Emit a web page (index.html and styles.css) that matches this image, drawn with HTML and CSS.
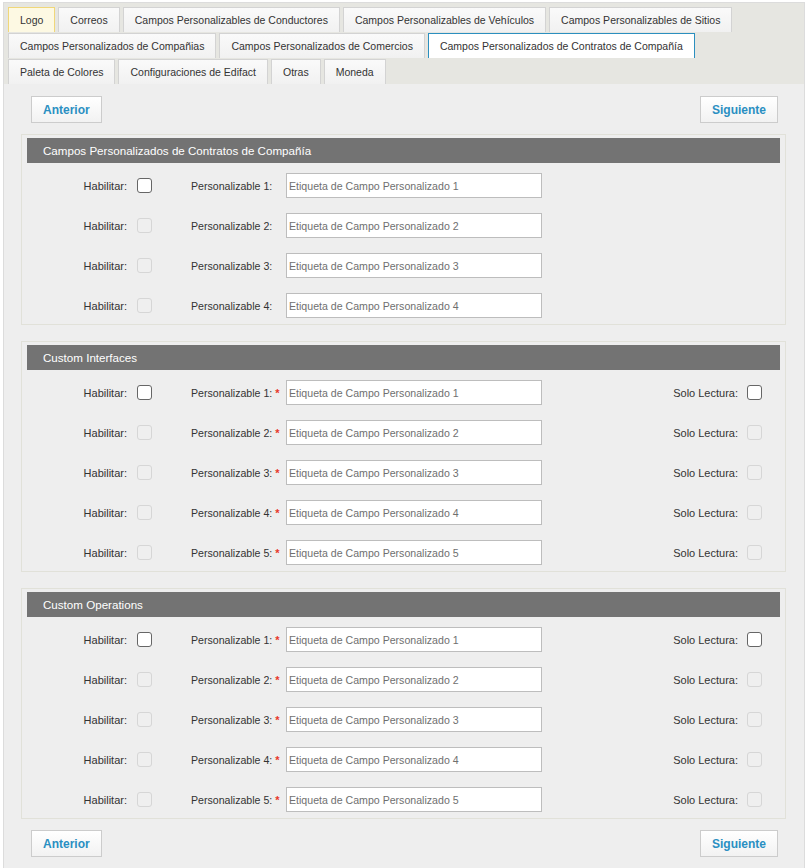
FILE: index.html
```html
<!DOCTYPE html>
<html lang="es">
<head>
<meta charset="utf-8">
<title>Configuración</title>
<link rel="stylesheet" href="styles.css">
</head>
<body>
<div class="page">
  <div class="tabstrip">
    <div class="tabrow">
      <span class="tab tab-hover">Logo</span>
      <span class="tab">Correos</span>
      <span class="tab">Campos Personalizables de Conductores</span>
      <span class="tab">Campos Personalizables de Vehículos</span>
      <span class="tab">Campos Personalizables de Sitios</span>
    </div>
    <div class="tabrow">
      <span class="tab">Campos Personalizados de Compañias</span>
      <span class="tab">Campos Personalizados de Comercios</span>
      <span class="tab tab-active">Campos Personalizados de Contratos de Compañía</span>
    </div>
    <div class="tabrow">
      <span class="tab">Paleta de Colores</span>
      <span class="tab">Configuraciones de Edifact</span>
      <span class="tab">Otras</span>
      <span class="tab">Moneda</span>
    </div>
  </div>

  <div class="content">
    <div class="nav">
      <button class="btn">Anterior</button>
      <button class="btn">Siguiente</button>
    </div>

    <div class="box">
      <div class="box-head">Campos Personalizados de Contratos de Compañía</div>
      <div class="rows">
        <div class="row"><span class="lbl-hab">Habilitar:</span><input type="checkbox" class="chk"><span class="lbl-pers">Personalizable 1:</span><input class="field" placeholder="Etiqueta de Campo Personalizado 1"></div>
        <div class="row"><span class="lbl-hab">Habilitar:</span><input type="checkbox" class="chk" disabled><span class="lbl-pers">Personalizable 2:</span><input class="field" placeholder="Etiqueta de Campo Personalizado 2"></div>
        <div class="row"><span class="lbl-hab">Habilitar:</span><input type="checkbox" class="chk" disabled><span class="lbl-pers">Personalizable 3:</span><input class="field" placeholder="Etiqueta de Campo Personalizado 3"></div>
        <div class="row"><span class="lbl-hab">Habilitar:</span><input type="checkbox" class="chk" disabled><span class="lbl-pers">Personalizable 4:</span><input class="field" placeholder="Etiqueta de Campo Personalizado 4"></div>
      </div>
    </div>

    <div class="box">
      <div class="box-head">Custom Interfaces</div>
      <div class="rows">
        <div class="row"><span class="lbl-hab">Habilitar:</span><input type="checkbox" class="chk"><span class="lbl-pers">Personalizable 1: <span class="req">*</span></span><input class="field" placeholder="Etiqueta de Campo Personalizado 1"><span class="lbl-ro">Solo Lectura:</span><input type="checkbox" class="chk chk-ro"></div>
        <div class="row"><span class="lbl-hab">Habilitar:</span><input type="checkbox" class="chk" disabled><span class="lbl-pers">Personalizable 2: <span class="req">*</span></span><input class="field" placeholder="Etiqueta de Campo Personalizado 2"><span class="lbl-ro">Solo Lectura:</span><input type="checkbox" class="chk chk-ro" disabled></div>
        <div class="row"><span class="lbl-hab">Habilitar:</span><input type="checkbox" class="chk" disabled><span class="lbl-pers">Personalizable 3: <span class="req">*</span></span><input class="field" placeholder="Etiqueta de Campo Personalizado 3"><span class="lbl-ro">Solo Lectura:</span><input type="checkbox" class="chk chk-ro" disabled></div>
        <div class="row"><span class="lbl-hab">Habilitar:</span><input type="checkbox" class="chk" disabled><span class="lbl-pers">Personalizable 4: <span class="req">*</span></span><input class="field" placeholder="Etiqueta de Campo Personalizado 4"><span class="lbl-ro">Solo Lectura:</span><input type="checkbox" class="chk chk-ro" disabled></div>
        <div class="row"><span class="lbl-hab">Habilitar:</span><input type="checkbox" class="chk" disabled><span class="lbl-pers">Personalizable 5: <span class="req">*</span></span><input class="field" placeholder="Etiqueta de Campo Personalizado 5"><span class="lbl-ro">Solo Lectura:</span><input type="checkbox" class="chk chk-ro" disabled></div>
      </div>
    </div>

    <div class="box">
      <div class="box-head">Custom Operations</div>
      <div class="rows">
        <div class="row"><span class="lbl-hab">Habilitar:</span><input type="checkbox" class="chk"><span class="lbl-pers">Personalizable 1: <span class="req">*</span></span><input class="field" placeholder="Etiqueta de Campo Personalizado 1"><span class="lbl-ro">Solo Lectura:</span><input type="checkbox" class="chk chk-ro"></div>
        <div class="row"><span class="lbl-hab">Habilitar:</span><input type="checkbox" class="chk" disabled><span class="lbl-pers">Personalizable 2: <span class="req">*</span></span><input class="field" placeholder="Etiqueta de Campo Personalizado 2"><span class="lbl-ro">Solo Lectura:</span><input type="checkbox" class="chk chk-ro" disabled></div>
        <div class="row"><span class="lbl-hab">Habilitar:</span><input type="checkbox" class="chk" disabled><span class="lbl-pers">Personalizable 3: <span class="req">*</span></span><input class="field" placeholder="Etiqueta de Campo Personalizado 3"><span class="lbl-ro">Solo Lectura:</span><input type="checkbox" class="chk chk-ro" disabled></div>
        <div class="row"><span class="lbl-hab">Habilitar:</span><input type="checkbox" class="chk" disabled><span class="lbl-pers">Personalizable 4: <span class="req">*</span></span><input class="field" placeholder="Etiqueta de Campo Personalizado 4"><span class="lbl-ro">Solo Lectura:</span><input type="checkbox" class="chk chk-ro" disabled></div>
        <div class="row"><span class="lbl-hab">Habilitar:</span><input type="checkbox" class="chk" disabled><span class="lbl-pers">Personalizable 5: <span class="req">*</span></span><input class="field" placeholder="Etiqueta de Campo Personalizado 5"><span class="lbl-ro">Solo Lectura:</span><input type="checkbox" class="chk chk-ro" disabled></div>
      </div>
    </div>

    <div class="nav nav-bottom">
      <button class="btn">Anterior</button>
      <button class="btn">Siguiente</button>
    </div>
  </div>
</div>
</body>
</html>
```

FILE: styles.css
```css
* { box-sizing: border-box; }

html, body {
  margin: 0;
  padding: 0;
  background: #ffffff;
}

body {
  font-family: "Liberation Sans", Arial, sans-serif;
  font-size: 11px;
  color: #333;
}

.page {
  margin: 2px 5px 0 3px;
  border: 1px solid #dcdcdc;
  border-bottom: none;
  background: #eeeeee;
  min-height: 866px;
}

.tabstrip {
  background: #e6e6e1;
  padding: 4px 4px 0 4px;
  display: flex;
  flex-direction: column;
  gap: 1px;
}

.tabrow {
  display: flex;
  gap: 3px;
}

.tab {
  height: 25px;
  line-height: 24px;
  padding: 0 11px;
  border: 1px solid #d3d3d3;
  border-bottom: none;
  background: linear-gradient(#fafafa, #f1f1f1);
  color: #333;
  font-size: 10.5px;
  white-space: nowrap;
}

.tab-hover {
  background: #fdf9e3;
  border-color: #f0d77a;
}

.tab-active {
  background: #ffffff;
  border-color: #2b8fbf;
}

.content {
  padding: 12px 18px 10px 17px;
  display: flex;
  flex-direction: column;
  gap: 16px;
}

.nav {
  display: flex;
  justify-content: space-between;
  padding: 0 8px 0 10px;
  margin-bottom: -5px;
}

.nav-bottom {
  margin: -5px 0 0 0;
}

.btn {
  height: 27px;
  padding: 0 11px;
  border: 1px solid #cccccc;
  background: linear-gradient(#ffffff, #f2f2f2);
  color: #2a8fc2;
  font-family: "Liberation Sans", Arial, sans-serif;
  font-size: 12px;
  font-weight: bold;
  cursor: pointer;
}

.box {
  border: 1px solid #e1e1d9;
  padding: 3px 5px 6px 5px;
}

.box-head {
  height: 25px;
  line-height: 25px;
  background: #737373;
  color: #ffffff;
  font-size: 11.6px;
  padding-left: 16px;
}

.rows {
  padding-top: 10px;
  display: flex;
  flex-direction: column;
  gap: 15px;
}

.row {
  display: flex;
  align-items: center;
  height: 25px;
}

.lbl-hab {
  width: 100px;
  text-align: right;
}

.chk {
  appearance: none;
  -webkit-appearance: none;
  margin: 0 0 0 10px;
  width: 15px;
  height: 15px;
  border: 1px solid #666;
  border-radius: 3px;
  background: #ffffff;
}

.chk:disabled {
  border-color: #d6d6d6;
  background: #efefef;
}

.lbl-pers {
  margin-left: 39px;
  width: 95px;
  white-space: nowrap;
  font-size: 10.6px;
}

.req {
  color: #e8372a;
  font-weight: bold;
  font-size: 11px;
}

.field {
  width: 256px;
  height: 25px;
  border: 1px solid #bdbdbd;
  background: #ffffff;
  padding: 0 2px;
  font-family: "Liberation Sans", Arial, sans-serif;
  font-size: 10.6px;
  color: #333;
}

.field::placeholder {
  color: #6f6f6f;
}

.lbl-ro {
  margin-left: auto;
}

.chk-ro {
  margin-left: 9px;
  margin-right: 18px;
}
```
